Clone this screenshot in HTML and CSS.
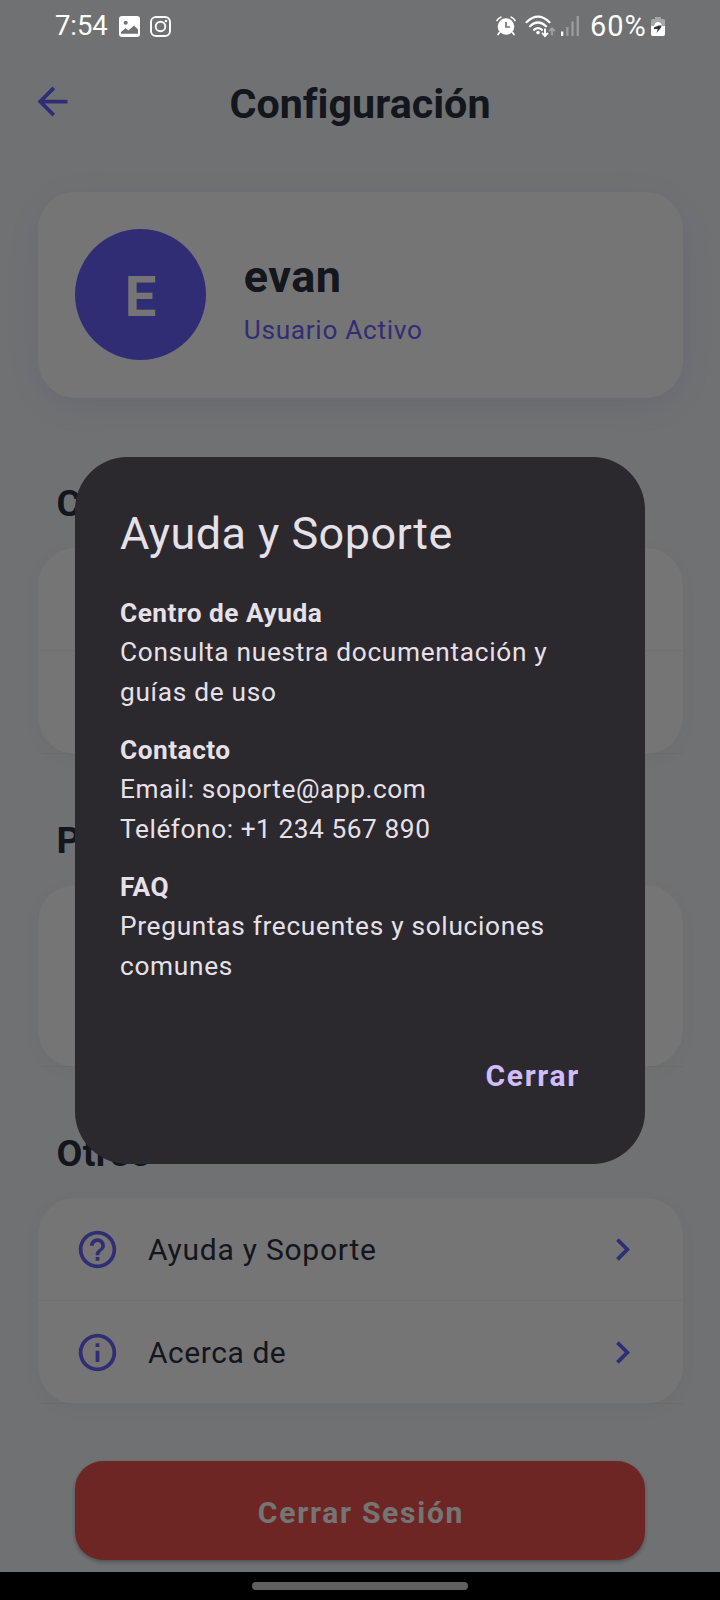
FILE: index.html
```html
<!DOCTYPE html>
<html lang="es">
<head>
<meta charset="utf-8">
<title>Configuración</title>
<link rel="stylesheet" href="styles.css">
</head>
<body>
<div class="phone">
  <main class="screen">
    <header class="header">
      <svg class="icon back" viewBox="0 0 24 24"><path d="M20 11H7.83l5.59-5.59L12 4l-8 8 8 8 1.41-1.41L7.83 13H20v-2z"/></svg>
      <h1 class="title">Configuración</h1>
    </header>

    <section class="profile card">
      <div class="avatar">E</div>
      <div class="profile-text">
        <div class="name">evan</div>
        <div class="status">Usuario Activo</div>
      </div>
    </section>

    <section class="group">
      <h2 class="label">C</h2>
      <div class="card list">
        <div class="row"></div>
        <div class="row"></div>
      </div>
    </section>

    <section class="group">
      <h2 class="label">P</h2>
      <div class="card list">
        <div class="row tall"></div>
      </div>
    </section>

    <section class="group">
      <h2 class="label">Otros</h2>
      <div class="card list">
        <div class="row">
          <svg class="icon" viewBox="0 0 24 24"><path d="M11 18h2v-2h-2v2zm1-16C6.48 2 2 6.48 2 12s4.48 10 10 10 10-4.48 10-10S17.52 2 12 2zm0 18c-4.41 0-8-3.59-8-8s3.59-8 8-8 8 3.59 8 8-3.59 8-8 8zm0-14c-2.21 0-4 1.79-4 4h2c0-1.1.9-2 2-2s2 .9 2 2c0 2-3 1.75-3 5h2c0-2.25 3-2.5 3-5 0-2.21-1.79-4-4-4z"/></svg>
          <span class="row-text">Ayuda y Soporte</span>
          <svg class="icon" viewBox="0 0 24 24"><path d="M10 6 8.59 7.41 13.17 12l-4.58 4.59L10 18l6-6z"/></svg>
        </div>
        <div class="row">
          <svg class="icon" viewBox="0 0 24 24"><path d="M11 7h2v2h-2zm0 4h2v6h-2zm1-9C6.48 2 2 6.48 2 12s4.48 10 10 10 10-4.48 10-10S17.52 2 12 2zm0 18c-4.41 0-8-3.59-8-8s3.59-8 8-8 8 3.59 8 8-3.59 8-8 8z"/></svg>
          <span class="row-text short">Acerca de</span>
          <svg class="icon" viewBox="0 0 24 24"><path d="M10 6 8.59 7.41 13.17 12l-4.58 4.59L10 18l6-6z"/></svg>
        </div>
      </div>
    </section>

    <button class="logout">Cerrar Sesión</button>
  </main>

  <div class="navbar"><div class="handle"></div></div>

  <div class="scrim">
    <div class="dialog">
      <h2 class="dialog-title">Ayuda y Soporte</h2>
      <p class="para"><b>Centro de Ayuda</b><br>Consulta nuestra documentación y<br>guías de uso</p>
      <p class="para contact"><b>Contacto</b><br>Email: soporte@app.com<br>Teléfono: +1 234 567 890</p>
      <p class="para"><b>FAQ</b><br>Preguntas frecuentes y soluciones<br>comunes</p>
      <div class="actions"><button class="close">Cerrar</button></div>
    </div>
  </div>

  <div class="statusbar">
    <span class="time">7:54</span>
    <svg class="s-image" viewBox="0 0 21 21"><path fill-rule="evenodd" d="M3 0h15a3 3 0 0 1 3 3v15a3 3 0 0 1-3 3H3a3 3 0 0 1-3-3V3a3 3 0 0 1 3-3zM6.700 4.800a2 2 0 1 0 .01 0zM2 17.800h17v-4.200l-4-4-5.500 5-3-2.400L2 16z"/></svg>
    <svg class="s-insta" viewBox="0 0 21 21"><g fill="none" stroke="#fff" stroke-width="1.900"><rect x="1" y="1" width="19" height="19" rx="5"/><circle cx="10.500" cy="10.500" r="4.800"/></g><circle cx="16" cy="5" r="1.300"/></svg>
    <span class="spacer"></span>
    <svg class="s-alarm" viewBox="0 0 20 20"><circle cx="10" cy="10.500" r="8.300"/><path d="M3.500 16.500 2 18.500M16.500 16.500l1.500 2M1 4.500Q2.200 2 4.800 1.200M19 4.500Q17.800 2 15.200 1.200" fill="none" stroke="#fff" stroke-width="1.700" stroke-linecap="round"/><path d="M10 6v5h4" fill="none" stroke="#707173" stroke-width="1.700"/></svg>
    <svg class="s-wifi" viewBox="0 0 31 24"><g fill="none" stroke="#fff" stroke-width="2.200" stroke-linecap="round"><path d="M1.500 8.200Q13 -2.800 24.500 8.200M5 12.200Q13 4.800 21 12.200M9 15.800q4-3.400 8 0"/></g><circle cx="13" cy="18.600" r="1.800"/><path d="M20 14.500v7M17 18.800l3 3.200 3-3.200" fill="none" stroke="#fff" stroke-width="1.900"/><path d="M27 21.500v-7M24.200 17.200l2.800-3 2.800 3" fill="none" stroke="#a0a1a2" stroke-width="1.800"/></svg>
    <svg class="s-signal" viewBox="0 0 18 20"><path d="M0 15.500h2.300V20H0z"/><path fill="#9b9c9d" d="M5.200 11h2.300v9H5.200zM10.400 5.500h2.300V20h-2.300zM15.600 0h2.300v20h-2.300z"/></svg>
    <span class="percent">60%</span>
    <svg class="s-batt" viewBox="0 0 14 19"><path fill="#a5a6a7" d="M4 0h6v2h2.500Q14 2 14 3.500V9H0V3.500Q0 2 1.500 2H4z"/><path d="M0 9h14v8.300q0 1.700-1.700 1.700H1.700Q0 19 0 17.300zM3 9q1-4 4-4t4 4z"/><path fill="#333" d="M3 10.500 7.500 8.500h3.200l-1 2.500-4.200 5 1.200-4H3z"/></svg>
  </div>
</div>
</body>
</html>
```
FILE: styles.css
```css
* { box-sizing: border-box; }
body { margin: 0; font-family: Roboto, "Liberation Sans", sans-serif; font-variant-ligatures: none; }
h1, h2, p { margin: 0; }
button { border: 0; font-family: inherit; }
svg { flex: none; display: block; }

.phone {
  position: relative;
  width: 720px;
  height: 1600px;
  overflow: hidden;
  display: flex;
  flex-direction: column;
  background: #f5f7fa;
  color: #2d3142;
}
.screen { height: 1572px; padding: 52px 37.5px 0; }

.header {
  height: 104px;
  margin-bottom: 35.6px;
  display: grid;
  grid-template-columns: 45px 1fr 45px;
  align-items: center;
}
.icon { width: 45px; height: 45px; fill: #6c63ff; }
.back { margin: -6px 0 0 -8px; }
.title { text-align: center; font-size: 41.25px; font-weight: 700; line-height: 50px; }

.card { background: #fff; border-radius: 37.5px; box-shadow: 0 4px 22px rgba(0, 0, 0, .05); }
.profile {
  display: flex;
  align-items: center;
  gap: 37.5px;
  padding: 37.5px;
  box-shadow: 0 8px 36px rgba(108, 99, 255, .12);
}
.avatar {
  width: 131.25px;
  height: 131.25px;
  border-radius: 50%;
  background: #6c63ff;
  color: #fff;
  text-align: center;
  font-size: 56.25px;
  font-weight: 700;
  line-height: 137px;
}
.name { font-size: 45px; font-weight: 700; line-height: 69px; letter-spacing: .5px; }
.status { margin-top: 2px; font-size: 26.25px; line-height: 34px; color: #6c63ff; letter-spacing: .68px; }

.group { margin-top: 64px; }
.profile + .group { margin-top: 83px; }
.label { padding-left: 19px; margin-bottom: 23px; font-size: 37.5px; font-weight: 700; line-height: 44px; letter-spacing: .4px; }
.row {
  height: 103.1px;
  padding: 0 37.5px;
  display: flex;
  align-items: center;
  gap: 28px;
  border-bottom: 1.875px solid rgba(128, 128, 128, .08);
}
.row.tall { height: 182px; }
.row-text { flex: 1; font-size: 30px; letter-spacing: .75px; }
.row-text.short { letter-spacing: .55px; }

.logout {
  display: block;
  width: 570px;
  height: 99.4px;
  margin: 56.6px auto 0;
  padding: 4px 0 0 2px;
  border-radius: 28px;
  background: #ef5350;
  color: #fff;
  font-size: 30px;
  font-weight: 700;
  letter-spacing: 1.75px;
  box-shadow: 0 2px 4px rgba(0, 0, 0, .3);
}

.navbar { height: 28px; padding-top: 10px; background: #000; position: relative; z-index: 2; }
.handle { width: 216px; height: 8px; margin: 0 auto; border-radius: 4px; background: #606060; }

.scrim {
  position: absolute;
  inset: 0;
  padding: 457px 75px 0;
  background: rgba(0, 0, 0, .54);
}
.dialog {
  height: 707px;
  padding: 45px;
  border-radius: 52.5px;
  background: #2b282e;
  color: #e6e0e9;
}
.dialog-title { margin-bottom: 29px; font-size: 45px; font-weight: 400; line-height: 63px; letter-spacing: .45px; }
.para { margin-bottom: 18.75px; font-size: 26.25px; line-height: 39.4px; letter-spacing: .69px; }
.para.contact { letter-spacing: .56px; }
.para b { letter-spacing: .5px; }
.actions { display: flex; justify-content: flex-end; margin-top: 60px; }
.close { padding: 0 20px; background: none; color: #d0bcff; font-size: 30px; font-weight: 700; line-height: 60px; letter-spacing: 1.7px; }

.statusbar {
  position: absolute;
  left: 0;
  top: 0;
  width: 720px;
  height: 52px;
  padding: 0 55px;
  display: flex;
  align-items: center;
  color: #fff;
  fill: #fff;
}
.time { width: 64px; font-size: 27.5px; line-height: 54px; letter-spacing: -.1px; }
.s-image { width: 21px; height: 21px; }
.s-insta { width: 21px; height: 21px; margin-left: 10px; }
.spacer { flex: 1; }
.s-alarm { width: 20px; height: 20px; margin-right: 9px; }
.s-wifi { width: 31px; height: 24px; margin-right: 5px; }
.s-signal { width: 18px; height: 20px; margin-right: 11px; }
.percent { width: 61px; font-size: 29px; line-height: 54px; letter-spacing: 1px; white-space: nowrap; }
.s-batt { width: 14px; height: 19px; }
```
